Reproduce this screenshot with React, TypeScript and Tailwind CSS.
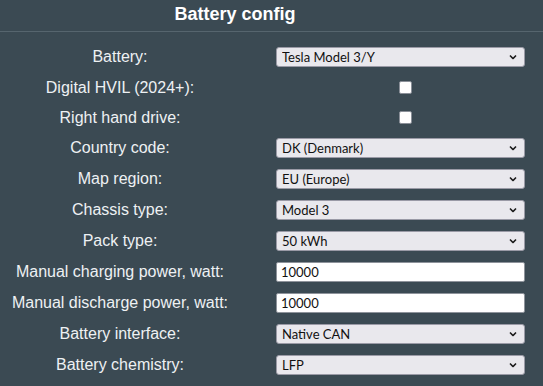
type Row =
  | { label: string; kind: "select"; value: string }
  | { label: string; kind: "check" }
  | { label: string; kind: "input"; value: string };

const rows: Row[] = [
  { label: "Battery:", kind: "select", value: "Tesla Model 3/Y" },
  { label: "Digital HVIL (2024+):", kind: "check" },
  { label: "Right hand drive:", kind: "check" },
  { label: "Country code:", kind: "select", value: "DK (Denmark)" },
  { label: "Map region:", kind: "select", value: "EU (Europe)" },
  { label: "Chassis type:", kind: "select", value: "Model 3" },
  { label: "Pack type:", kind: "select", value: "50 kWh" },
  { label: "Manual charging power, watt:", kind: "input", value: "10000" },
  { label: "Manual discharge power, watt:", kind: "input", value: "10000" },
  { label: "Battery interface:", kind: "select", value: "Native CAN" },
  { label: "Battery chemistry:", kind: "select", value: "LFP" },
];

const controlFont = { fontFamily: "Lato, 'Noto Sans', sans-serif" };

function Chevron() {
  return (
    <svg
      className="pointer-events-none absolute right-[8px] top-1/2 h-[5px] w-[8px] -translate-y-1/2"
      viewBox="0 0 8 5"
      fill="none"
      aria-hidden="true"
    >
      <path d="M1 1l3 3 3-3" stroke="#1b1b1b" strokeWidth="1.6" />
    </svg>
  );
}

function Control({ row }: { row: Row }) {
  if (row.kind === "check") {
    return (
      <div className="flex w-[249px] justify-center pl-[9px]">
        <input
          type="checkbox"
          className="h-[13px] w-[13px] appearance-none rounded-[2px] border border-[#8a8f98] bg-white"
        />
      </div>
    );
  }
  if (row.kind === "input") {
    return (
      <input
        type="text"
        defaultValue={row.value}
        style={controlFont}
        className="h-[20px] w-[249px] rounded-[2px] border border-[#8e939b] bg-white px-[4px] text-[13px] text-[#111]"
      />
    );
  }
  return (
    <div className="relative w-[249px]">
      <select
        style={controlFont}
        className="h-[20px] w-full appearance-none rounded-[3px] border border-[#9a9aa6] bg-[#e9e8ed] pl-[5px] text-[13px] text-[#111]"
      >
        <option>{row.value}</option>
      </select>
      <Chevron />
    </div>
  );
}

export default function App() {
  return (
    <div
      className="h-[386px] w-[543px] overflow-hidden bg-[#3b4a53] text-[#eef1f3]"
      style={{ fontFamily: "'Liberation Sans', Arial, sans-serif" }}
    >
      <div className="flex h-[31px] w-[470px] items-center justify-center pb-[3px] text-[18px] font-bold text-white">
        Battery config
      </div>
      <div className="h-px w-full bg-[#56656e]" />
      <div className="pt-[9.5px]">
        {rows.map((row) => (
          <div
            key={row.label}
            className={`flex items-center ${row.kind === "check" ? "h-[30px]" : "h-[31px]"}`}
          >
            <div className="w-[240px] whitespace-nowrap text-center text-[16px]">{row.label}</div>
            <div className="pl-[36px]">
              <Control row={row} />
            </div>
          </div>
        ))}
      </div>
    </div>
  );
}
